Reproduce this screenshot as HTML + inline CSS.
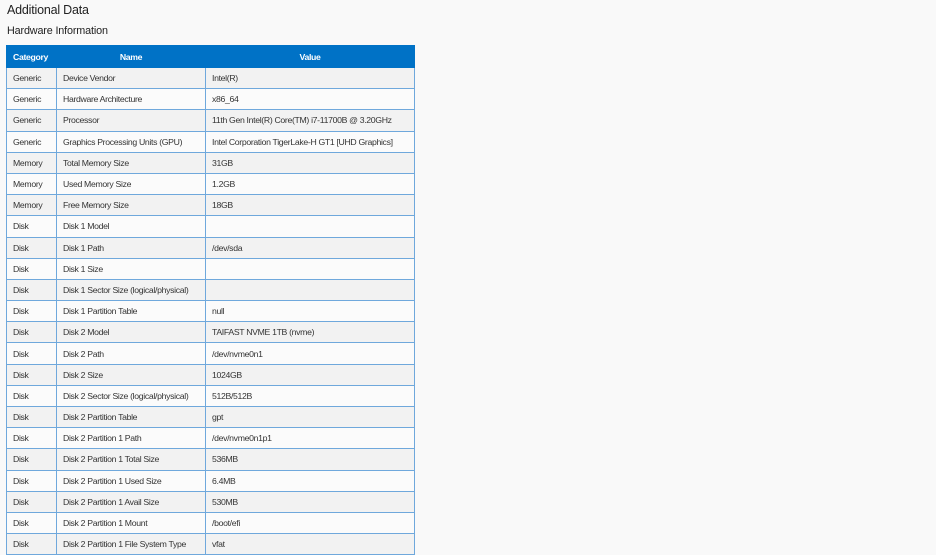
<!DOCTYPE html>
<html><head><meta charset="utf-8"><style>
body{margin:0;background:#f9f9f9;font-family:"Liberation Sans",Arial,sans-serif;color:#333;width:936px;height:555px;overflow:hidden}
h1{font-size:12.5px;font-weight:normal;margin:0;position:absolute;left:7px;top:3px;color:#222;letter-spacing:-0.2px}
h2{font-size:10.8px;font-weight:normal;margin:0;position:absolute;left:7px;top:25px;color:#222;letter-spacing:-0.15px}
table{position:absolute;left:6px;top:45px;border-collapse:collapse;width:408px;font-size:8.7px;letter-spacing:-0.33px;table-layout:fixed}
th{background:#0072c6;color:#fff;font-weight:bold;height:21px;padding:0 6px;border:1px solid #0072c6}
th:first-child{text-align:left}
td{border:1px solid #6fa8dc;height:20.2px;padding:0 5px 0 6px;white-space:nowrap;overflow:hidden;line-height:10px}
tr:nth-child(odd) td{background:#f2f2f2}
tr:nth-child(even) td{background:#fbfbfb}
</style></head><body>
<h1>Additional Data</h1>
<h2>Hardware Information</h2>
<table>
<colgroup><col style="width:50px"><col style="width:149px"><col style="width:209px"></colgroup>
<thead><tr><th>Category</th><th>Name</th><th>Value</th></tr></thead>
<tbody>
<tr><td>Generic</td><td>Device Vendor</td><td>Intel(R)</td></tr>
<tr><td>Generic</td><td>Hardware Architecture</td><td>x86_64</td></tr>
<tr><td>Generic</td><td>Processor</td><td>11th Gen Intel(R) Core(TM) i7-11700B @ 3.20GHz</td></tr>
<tr><td>Generic</td><td>Graphics Processing Units (GPU)</td><td>Intel Corporation TigerLake-H GT1 [UHD Graphics]</td></tr>
<tr><td>Memory</td><td>Total Memory Size</td><td>31GB</td></tr>
<tr><td>Memory</td><td>Used Memory Size</td><td>1.2GB</td></tr>
<tr><td>Memory</td><td>Free Memory Size</td><td>18GB</td></tr>
<tr><td>Disk</td><td>Disk 1 Model</td><td></td></tr>
<tr><td>Disk</td><td>Disk 1 Path</td><td>/dev/sda</td></tr>
<tr><td>Disk</td><td>Disk 1 Size</td><td></td></tr>
<tr><td>Disk</td><td>Disk 1 Sector Size (logical/physical)</td><td></td></tr>
<tr><td>Disk</td><td>Disk 1 Partition Table</td><td>null</td></tr>
<tr><td>Disk</td><td>Disk 2 Model</td><td>TAIFAST NVME 1TB (nvme)</td></tr>
<tr><td>Disk</td><td>Disk 2 Path</td><td>/dev/nvme0n1</td></tr>
<tr><td>Disk</td><td>Disk 2 Size</td><td>1024GB</td></tr>
<tr><td>Disk</td><td>Disk 2 Sector Size (logical/physical)</td><td>512B/512B</td></tr>
<tr><td>Disk</td><td>Disk 2 Partition Table</td><td>gpt</td></tr>
<tr><td>Disk</td><td>Disk 2 Partition 1 Path</td><td>/dev/nvme0n1p1</td></tr>
<tr><td>Disk</td><td>Disk 2 Partition 1 Total Size</td><td>536MB</td></tr>
<tr><td>Disk</td><td>Disk 2 Partition 1 Used Size</td><td>6.4MB</td></tr>
<tr><td>Disk</td><td>Disk 2 Partition 1 Avail Size</td><td>530MB</td></tr>
<tr><td>Disk</td><td>Disk 2 Partition 1 Mount</td><td>/boot/efi</td></tr>
<tr><td>Disk</td><td>Disk 2 Partition 1 File System Type</td><td>vfat</td></tr>
</tbody></table>
</body></html>
